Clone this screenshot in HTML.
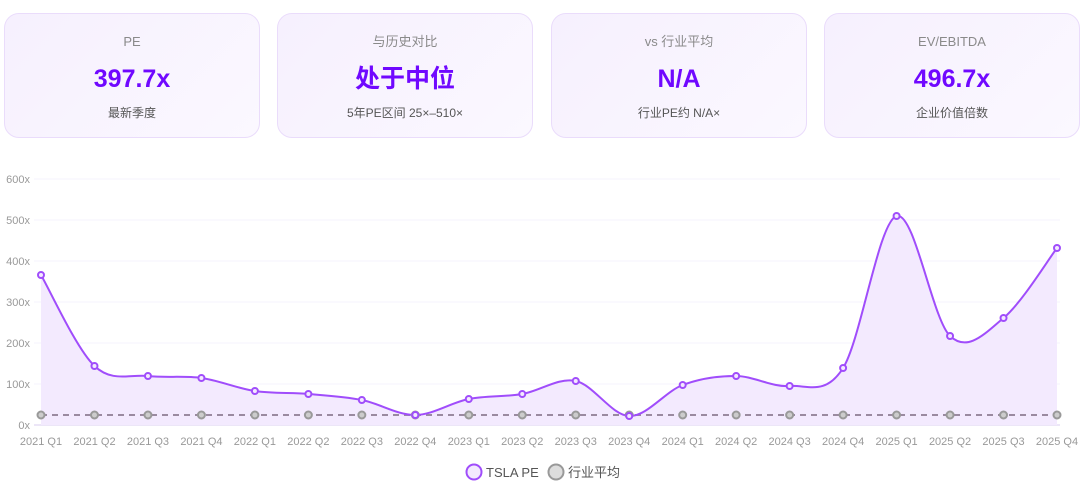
<!DOCTYPE html>
<html><head><meta charset="utf-8"><style>
body{margin:0;width:1086px;height:487px;background:#fff;font-family:"Liberation Sans","Noto Sans CJK SC",sans-serif;position:relative;overflow:hidden}
.card{position:absolute;top:13px;width:254px;height:123px;border:1px solid #eadcfb;border-radius:15px;background:linear-gradient(135deg,#f6f0fe,#fbf8ff);text-align:center}
.card div{line-height:1}
.t{position:absolute;top:21px;width:100%;font-size:13px;color:#8a8a8a}
.v{position:absolute;top:53px;width:100%;font-size:25px;font-weight:bold;color:#7008ff}
.s{position:absolute;top:93px;width:100%;font-size:12px;color:#555}
</style></head><body>
<div class="card" style="left:4px"><div class="t">PE</div><div class="v">397.7x</div><div class="s">最新季度</div></div>
<div class="card" style="left:277px"><div class="t">与历史对比</div><div class="v">处于中位</div><div class="s">5年PE区间 25×–510×</div></div>
<div class="card" style="left:551px"><div class="t">vs 行业平均</div><div class="v">N/A</div><div class="s">行业PE约 N/A×</div></div>
<div class="card" style="left:824px"><div class="t">EV/EBITDA</div><div class="v">496.7x</div><div class="s">企业价值倍数</div></div>
<svg id="c" width="1086" height="487" style="position:absolute;left:0;top:0" font-family="Liberation Sans, sans-serif"></svg>
<script>
var s='',ys=[275,366,376,378,391,394,400,415,399,394,381,416,385,376,386,368,216,336,318,248];
var lab=['2021 Q1','2021 Q2','2021 Q3','2021 Q4','2022 Q1','2022 Q2','2022 Q3','2022 Q4','2023 Q1','2023 Q2','2023 Q3','2023 Q4','2024 Q1','2024 Q2','2024 Q3','2024 Q4','2025 Q1','2025 Q2','2025 Q3','2025 Q4'];
for(var i=0;i<=6;i++){var y=425-i*41;s+='<line x1="34" x2="1060" y1="'+y+'" y2="'+y+'" stroke="'+(i?'#f6f3fc':'#d9cdef')+'"/>';s+='<text x="30" y="'+(y+4)+'" text-anchor="end" font-size="11" fill="#999">'+(i*100)+'x</text>';}
var xs=ys.map(function(_,i){return 41+i*1016/19});
var d='M'+xs[0]+','+ys[0];
for(var i=0;i<19;i++){var p0=i?i-1:0,p3=i<18?i+2:19;
var c1x=xs[i]+(xs[i+1]-xs[p0])/6,c1y=ys[i]+(ys[i+1]-ys[p0])/6,c2x=xs[i+1]-(xs[p3]-xs[i])/6,c2y=ys[i+1]-(ys[p3]-ys[i])/6;
d+=' C'+c1x+','+c1y+' '+c2x+','+c2y+' '+xs[i+1]+','+ys[i+1];}
s+='<path d="'+d+' L1057,425 L41,425Z" fill="#f3eafe"/>';
s+='<line x1="41" x2="1057" y1="415" y2="415" stroke="#9a8aa0" stroke-width="2" stroke-dasharray="6,5"/>';
s+='<path d="'+d+'" fill="none" stroke="#a04dfb" stroke-width="2"/>';
for(var i=0;i<20;i++){s+='<circle cx="'+xs[i]+'" cy="415" r="3.5" fill="#ccc" stroke="#999" stroke-width="2"/>';
s+='<circle cx="'+xs[i]+'" cy="'+ys[i]+'" r="3" fill="#f3eafe" stroke="#a04dfb" stroke-width="2"/>';
s+='<text x="'+xs[i]+'" y="445" text-anchor="middle" font-size="11" fill="#999">'+lab[i]+'</text>';}
s+='<circle cx="474" cy="472" r="7.5" fill="#f3eafe" stroke="#a04dfb" stroke-width="2"/><text x="486" y="477" font-size="13" fill="#555">TSLA PE</text>';
s+='<circle cx="556" cy="472" r="7.5" fill="#ddd" stroke="#999" stroke-width="2"/><text x="568" y="477" font-size="13" fill="#555" font-family="Liberation Sans, Noto Sans CJK SC, sans-serif">行业平均</text>';
document.getElementById('c').innerHTML=s;
</script>
</body></html>
